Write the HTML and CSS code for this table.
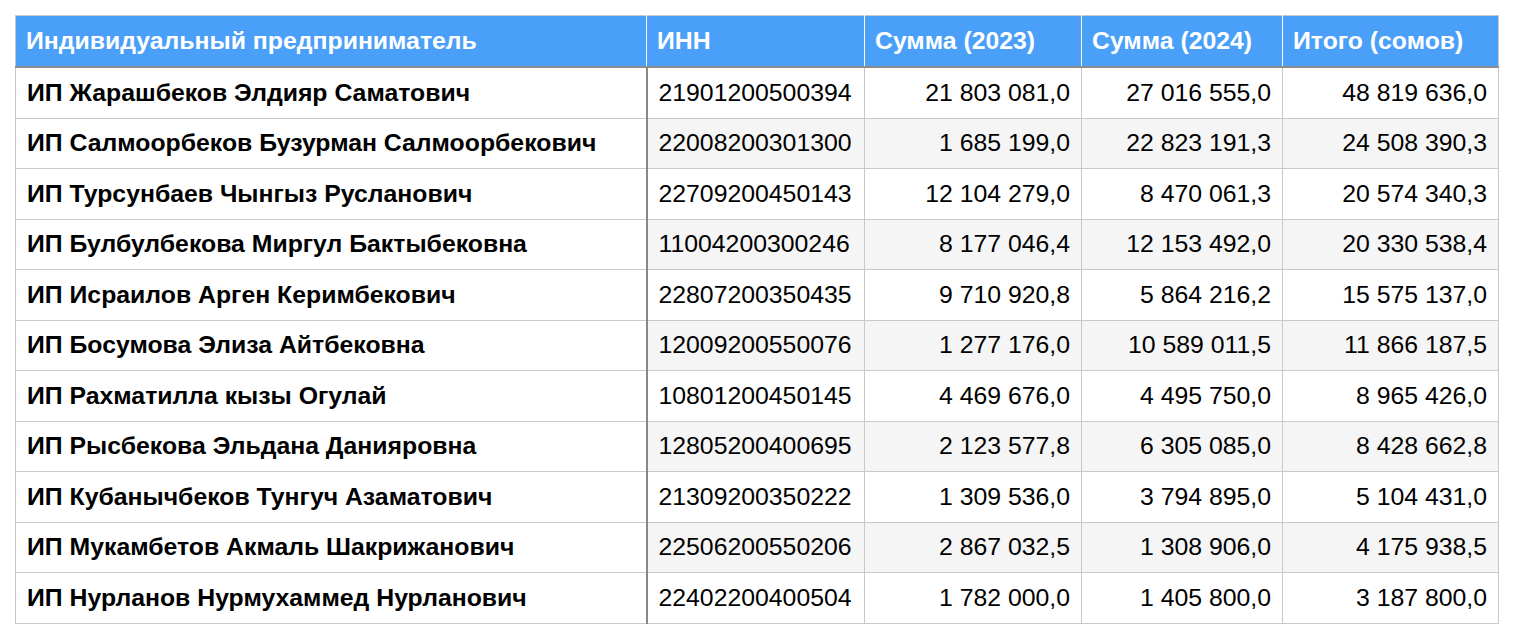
FILE: index.html
```html
<!DOCTYPE html>
<html lang="ru">
<head>
<meta charset="utf-8">
<title>ИП</title>
<link rel="stylesheet" href="styles.css">
</head>
<body>
<table class="data">
  <colgroup>
    <col class="c-name"><col class="c-inn"><col class="c-sum"><col class="c-sum2"><col class="c-total">
  </colgroup>
  <thead>
    <tr>
      <th>Индивидуальный предприниматель</th>
      <th>ИНН</th>
      <th>Сумма (2023)</th>
      <th>Сумма (2024)</th>
      <th>Итого (сомов)</th>
    </tr>
  </thead>
  <tbody>
    <tr><td>ИП Жарашбеков Элдияр Саматович</td><td>21901200500394</td><td>21 803 081,0</td><td>27 016 555,0</td><td>48 819 636,0</td></tr>
    <tr><td>ИП Салмоорбеков Бузурман Салмоорбекович</td><td>22008200301300</td><td>1 685 199,0</td><td>22 823 191,3</td><td>24 508 390,3</td></tr>
    <tr><td>ИП Турсунбаев Чынгыз Русланович</td><td>22709200450143</td><td>12 104 279,0</td><td>8 470 061,3</td><td>20 574 340,3</td></tr>
    <tr><td>ИП Булбулбекова Миргул Бактыбековна</td><td>11004200300246</td><td>8 177 046,4</td><td>12 153 492,0</td><td>20 330 538,4</td></tr>
    <tr><td>ИП Исраилов Арген Керимбекович</td><td>22807200350435</td><td>9 710 920,8</td><td>5 864 216,2</td><td>15 575 137,0</td></tr>
    <tr><td>ИП Босумова Элиза Айтбековна</td><td>12009200550076</td><td>1 277 176,0</td><td>10 589 011,5</td><td>11 866 187,5</td></tr>
    <tr><td>ИП Рахматилла кызы Огулай</td><td>10801200450145</td><td>4 469 676,0</td><td>4 495 750,0</td><td>8 965 426,0</td></tr>
    <tr><td>ИП Рысбекова Эльдана Данияровна</td><td>12805200400695</td><td>2 123 577,8</td><td>6 305 085,0</td><td>8 428 662,8</td></tr>
    <tr><td>ИП Кубанычбеков Тунгуч Азаматович</td><td>21309200350222</td><td>1 309 536,0</td><td>3 794 895,0</td><td>5 104 431,0</td></tr>
    <tr><td>ИП Мукамбетов Акмаль Шакрижанович</td><td>22506200550206</td><td>2 867 032,5</td><td>1 308 906,0</td><td>4 175 938,5</td></tr>
    <tr><td>ИП Нурланов Нурмухаммед Нурланович</td><td>22402200400504</td><td>1 782 000,0</td><td>1 405 800,0</td><td>3 187 800,0</td></tr>
  </tbody>
</table>
</body>
</html>
```

FILE: styles.css
```css
html, body {
  margin: 0;
  padding: 0;
  background: #ffffff;
}
body {
  padding: 15px;
  font-family: "Liberation Sans", Arial, sans-serif;
  color: #000000;
}
.data {
  border-collapse: collapse;
  table-layout: fixed;
  width: 1484px;
  font-size: 24.8px;
  border: 1px solid #c9c9c9;
}
.c-name { width: 631px; }
.c-inn { width: 218px; }
.c-sum { width: 217px; }
.c-sum2 { width: 201px; }
.c-total { width: 216px; }

.data th {
  background: #4a9ff9;
  color: #ffffff;
  font-weight: bold;
  text-align: left;
  height: 50px;
  padding: 0 10px;
  border-left: 1px solid #ffffff;
  border-bottom: 2px solid #8c8c8c;
  white-space: nowrap;
}
.data th:first-child { border-left: 1px solid #c9c9c9; }

.data td {
  height: 49.5px;
  padding: 0 11px;
  border: 1px solid #c9c9c9;
  white-space: nowrap;
  text-align: right;
}
.data td:first-child {
  text-align: left;
  font-weight: bold;
  border-right: 2px solid #8a8683;
}
.data td:nth-child(2) {
  text-align: left;
}
.data tbody tr:nth-child(even) td:not(:first-child) {
  background: #f5f5f5;
}
```
